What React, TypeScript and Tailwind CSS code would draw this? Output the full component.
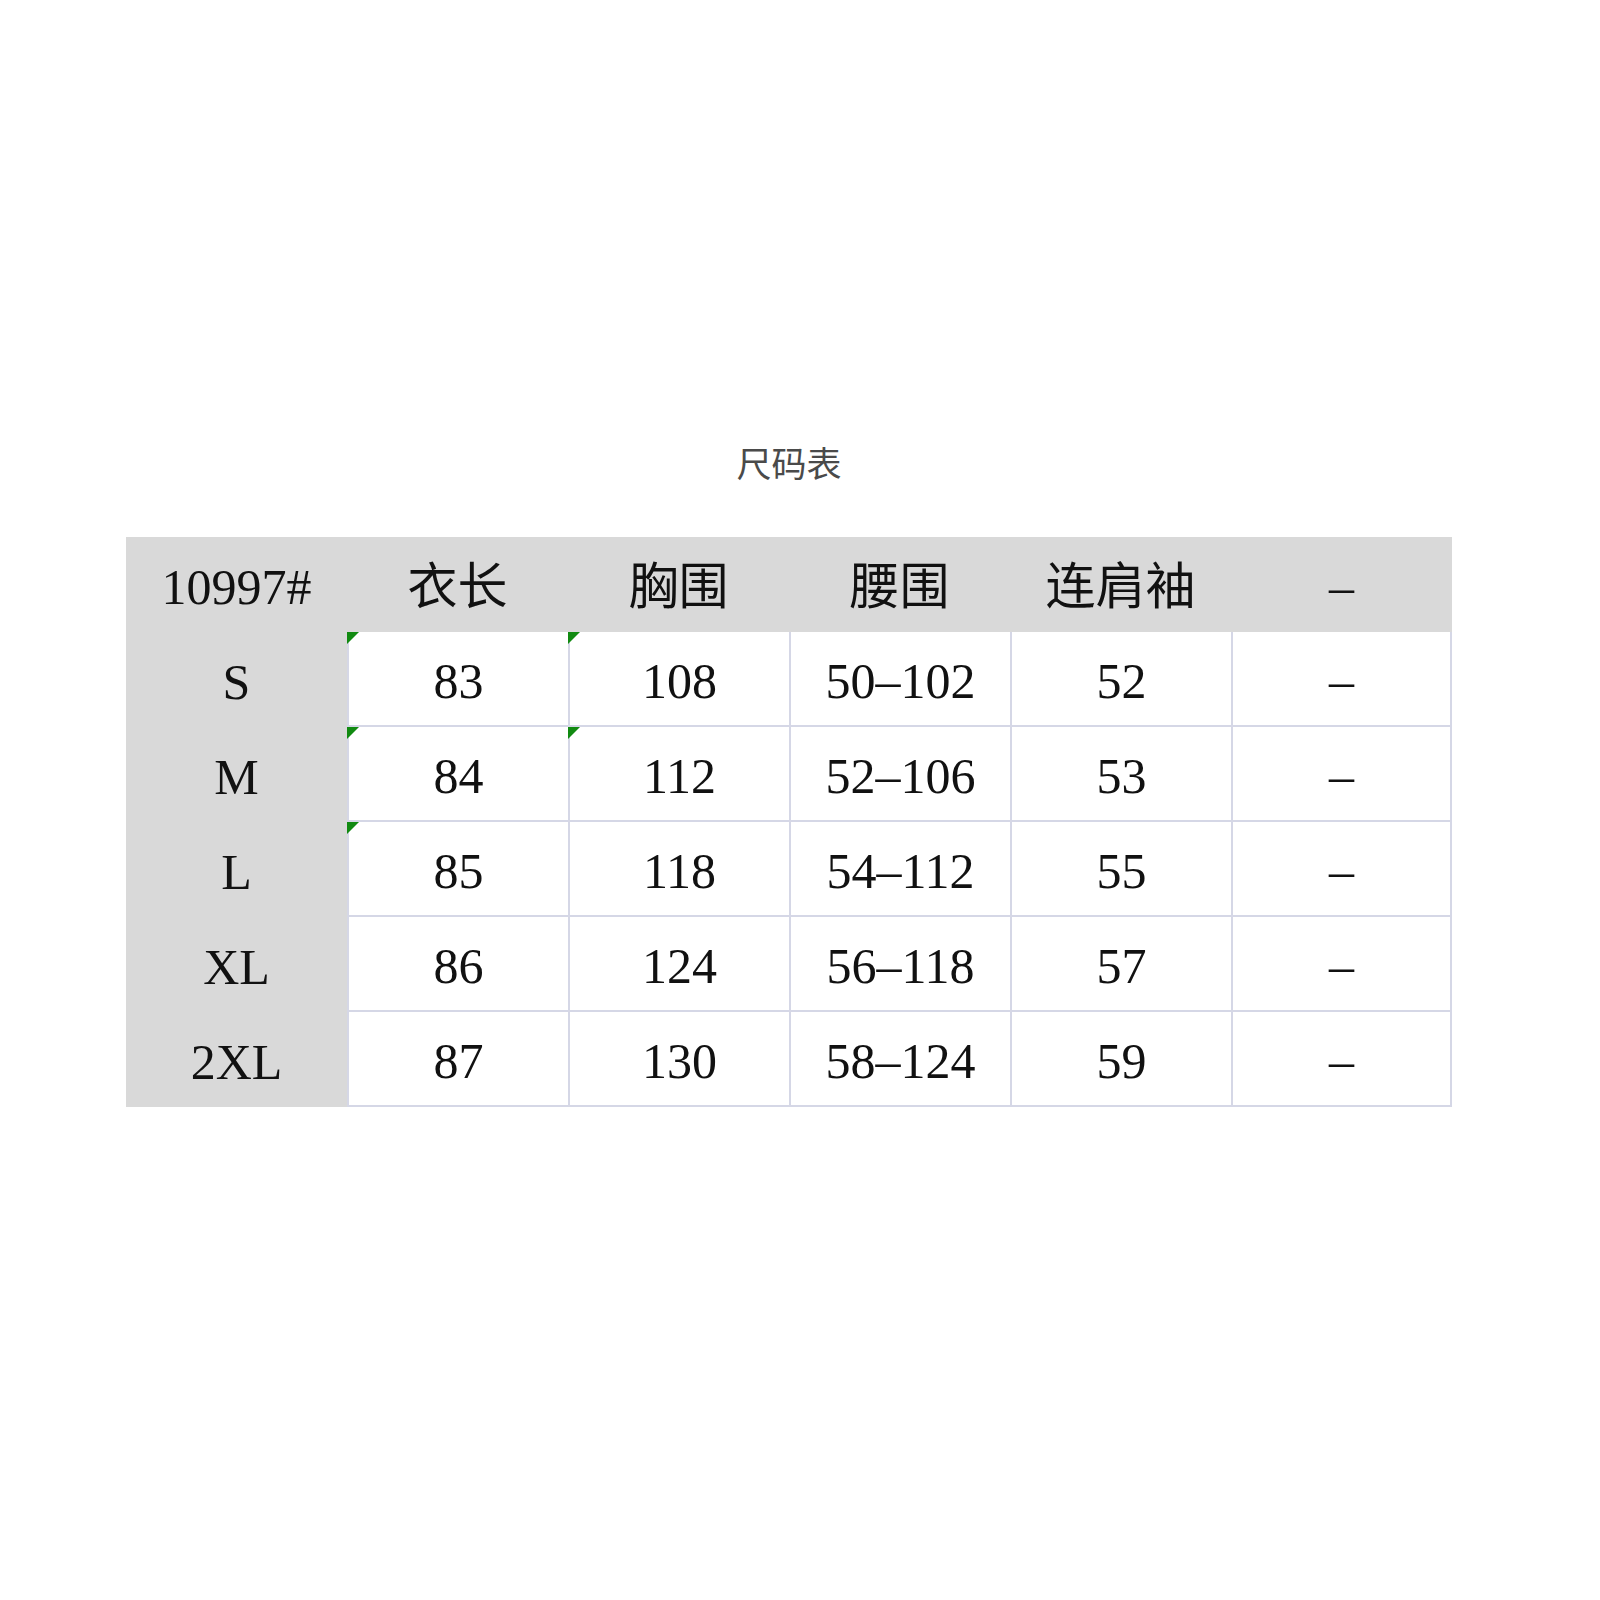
import React from "react";

const headers = ["10997#", "衣长", "胸围", "腰围", "连肩袖", "–"];
const rows: { size: string; vals: string[]; marks: number[] }[] = [
  { size: "S", vals: ["83", "108", "50–102", "52", "–"], marks: [0, 1] },
  { size: "M", vals: ["84", "112", "52–106", "53", "–"], marks: [0, 1] },
  { size: "L", vals: ["85", "118", "54–112", "55", "–"], marks: [0] },
  { size: "XL", vals: ["86", "124", "56–118", "57", "–"], marks: [] },
  { size: "2XL", vals: ["87", "130", "58–124", "59", "–"], marks: [] },
];

const font = { fontFamily: '"Liberation Serif", "Noto Sans CJK SC", serif' };

export default function App() {
  return (
    <div className="w-[1600px] h-[1600px] bg-white pt-[444px]">
      <div className="ml-[126px] w-[1326px]">
        <div
          className="h-[35px] leading-[35px] text-center text-[35px] text-[#4a4a4a]"
          style={{ fontFamily: '"Noto Sans CJK SC", sans-serif' }}
        >
          尺码表
        </div>
        <div className="mt-[58px] grid grid-cols-6 text-[50px] text-[#111]" style={font}>
          {headers.map((h, i) => (
            <div
              key={"h" + i}
              className="h-[95px] pt-[6px] bg-[#d9d9d9] flex items-center justify-center"
            >
              {h}
            </div>
          ))}
          {rows.map((r) => (
            <React.Fragment key={r.size}>
              <div className="h-[95px] pt-[6px] bg-[#d9d9d9] flex items-center justify-center">
                {r.size}
              </div>
              {r.vals.map((v, ci) => (
                <div
                  key={ci}
                  className={
                    "relative h-[95px] pt-[6px] bg-white flex items-center justify-center border-l-2 border-b-2 border-[#d5d7e6]" +
                    (ci === 4 ? " border-r-2" : "")
                  }
                >
                  {r.marks.includes(ci) && (
                    <div className="absolute left-[-2px] top-0 w-[12px] h-[12px] bg-[#118a11] [clip-path:polygon(0_0,100%_0,0_100%)]" />
                  )}
                  {v}
                </div>
              ))}
            </React.Fragment>
          ))}
        </div>
      </div>
    </div>
  );
}
